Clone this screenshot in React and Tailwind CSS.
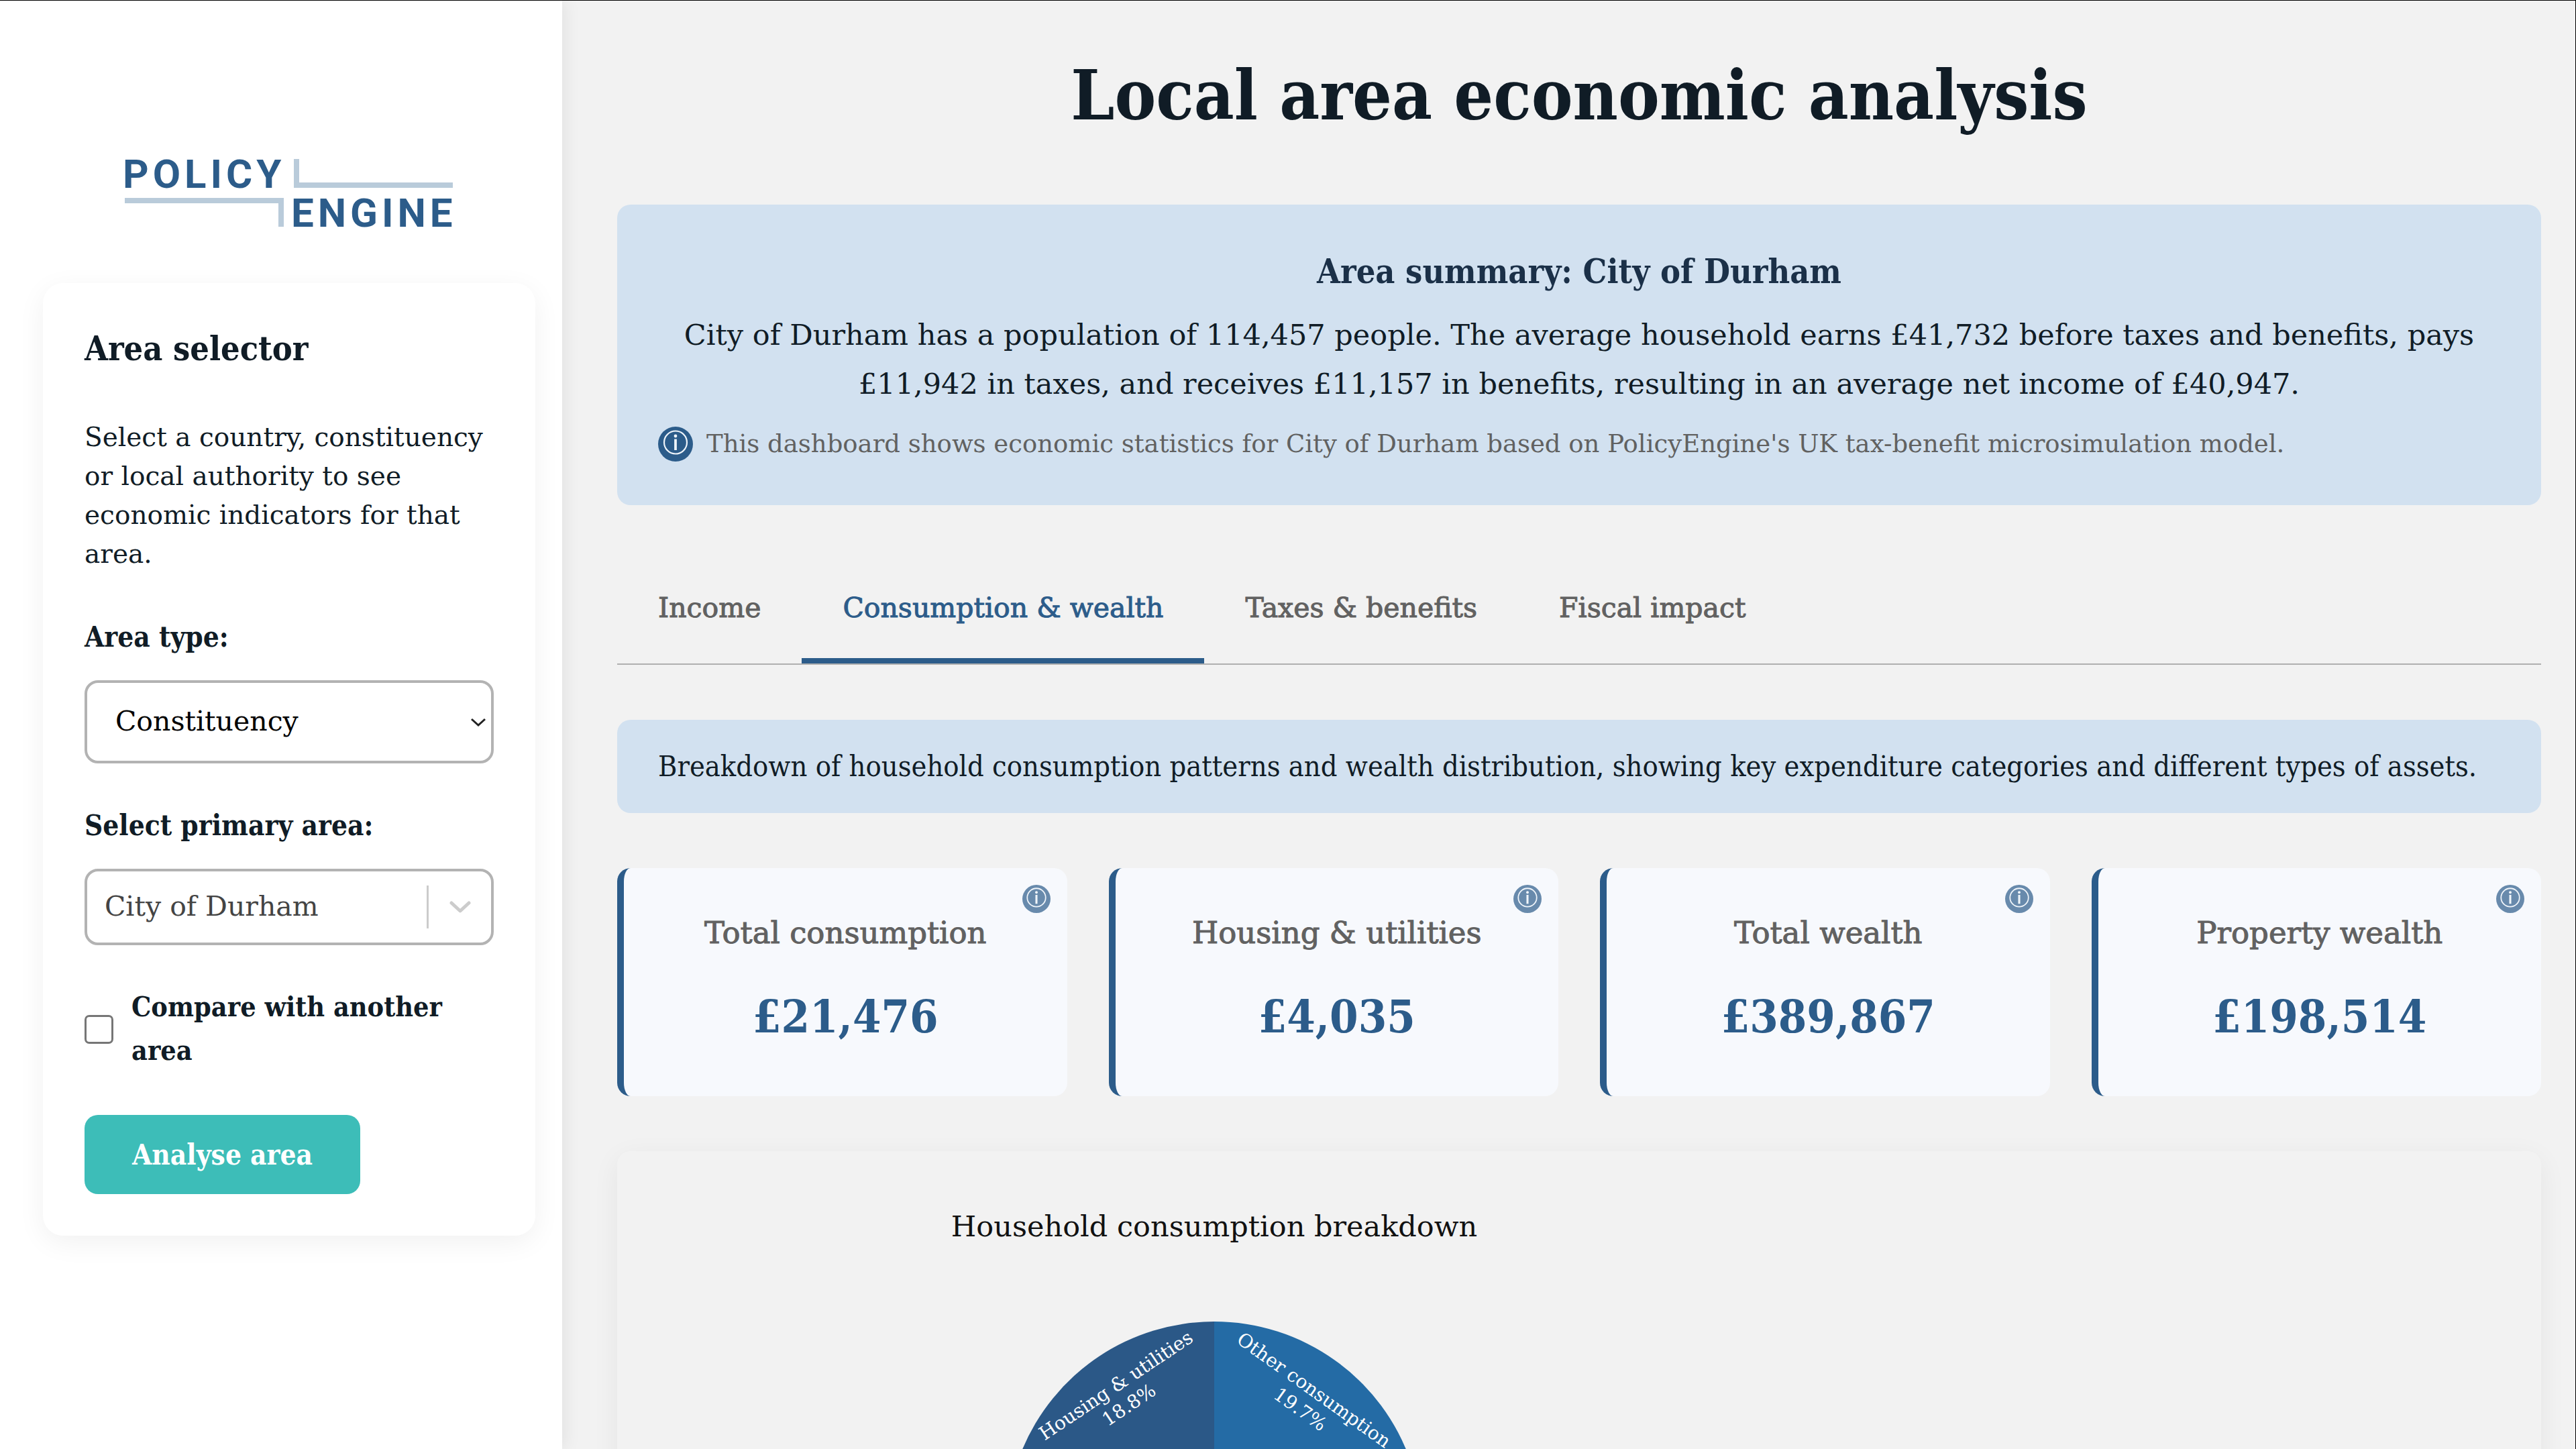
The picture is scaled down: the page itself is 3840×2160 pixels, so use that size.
import React from "react";

const logoFont = { fontFamily: 'Roboto, "Liberation Sans", sans-serif', fontWeight: 700 };

function Logo() {
  return (
    <svg viewBox="-16 -16 522 136" className="mx-auto block h-[136px] w-[522px]" role="img" aria-label="PolicyEngine">
      <g fill="#2c5c8a" fontSize="60" style={logoFont} letterSpacing="6">
        <text x="-3" y="44">POLICY</text>
        <text x="248" y="102">ENGINE</text>
      </g>
      <g fill="none" stroke="#b9cbda" strokeWidth="8">
        <path d="M256 1V40H489" />
        <path d="M0 63H233V102" />
      </g>
    </svg>
  );
}

function InfoIcon({ className }) {
  return (
    <svg viewBox="0 0 52 52" className={className} aria-hidden="true">
      <circle cx="26" cy="26" r="26" fill="#2c5c8a" />
      <circle cx="26" cy="23.5" r="17" fill="none" stroke="#eef4fa" strokeWidth="2.2" />
      <circle cx="26" cy="14" r="2.4" fill="#eef4fa" />
      <path d="M26 18.5V35" stroke="#eef4fa" strokeWidth="3.8" />
    </svg>
  );
}

function Sidebar() {
  return (
    <aside className="z-10 w-[838px] shrink-0 bg-white pt-[219px] pr-10 pl-16 shadow-[4px_0_24px_rgba(0,0,0,0.07)]">
      <Logo />
      <form className="mt-[66px] rounded-[30px] bg-white p-[62px] shadow-[0_10px_42px_rgba(0,0,0,0.06)]">
        <h2 className="font-['DejaVu_Serif_Condensed','DejaVu_Serif',serif] text-[50px] leading-[72px] font-bold">Area selector</h2>
        <p className="mt-[67px] text-[39px] leading-[58px]">
          Select a country, constituency or local authority to see economic indicators for that area.
        </p>
        <label htmlFor="type" className="mt-[66px] block font-['DejaVu_Serif_Condensed','DejaVu_Serif',serif] text-[42px] leading-[58px] font-bold">Area type:</label>
        <div className="relative mt-[35px]">
          <select id="type" className="h-[124px] w-full appearance-none rounded-[20px] border-4 border-[#b3b3b3] bg-white px-[42px] text-[41px] text-black">
            <option>Constituency</option>
          </select>
          <svg viewBox="0 0 24 14" className="pointer-events-none absolute top-[56px] right-[11px] w-6" fill="none" stroke="#222" strokeWidth="3">
            <path d="M2 2L12 11L22 2" />
          </svg>
        </div>
        <label htmlFor="area" className="mt-[64px] block font-['DejaVu_Serif_Condensed','DejaVu_Serif',serif] text-[42px] leading-[58px] font-bold">Select primary area:</label>
        <div className="relative mt-[35px]">
          <select id="area" className="h-[114px] w-full appearance-none rounded-[20px] border-4 border-[#b3b3b3] bg-white px-[26px] text-[41px] text-[#444]">
            <option>City of Durham</option>
          </select>
          <div className="pointer-events-none absolute inset-y-0 right-[34px] flex items-center gap-[31px]">
            <span className="h-16 w-[3px] bg-[#cccccc]" />
            <svg viewBox="0 0 32 20" className="w-8" fill="none" stroke="#cccccc" strokeWidth="5" strokeLinecap="round" strokeLinejoin="round">
              <path d="M3 4L16 16L29 4" />
            </svg>
          </div>
        </div>
        <label className="mt-[60px] flex items-center gap-[27px] font-['DejaVu_Serif_Condensed','DejaVu_Serif',serif] text-[41px] leading-[65px] font-bold">
          <input type="checkbox" className="size-[43px] shrink-0 appearance-none rounded-[7px] border-[3px] border-[#767676] bg-white" />
          <span>Compare with another area</span>
        </label>
        <button type="button" className="mt-[63px] h-[118px] rounded-[20px] bg-[#3dbdb8] px-[71px] font-['DejaVu_Serif_Condensed','DejaVu_Serif',serif] text-[42px] font-bold text-white">
          Analyse area
        </button>
      </form>
    </aside>
  );
}

const tabs = ["Income", "Consumption & wealth", "Taxes & benefits", "Fiscal impact"];

const metrics = [
  ["Total consumption", "£21,476"],
  ["Housing & utilities", "£4,035"],
  ["Total wealth", "£389,867"],
  ["Property wealth", "£198,514"],
];

function PieChart() {
  return (
    <svg viewBox="0 0 1780 900" className="block h-[900px] w-[1780px]" role="img" aria-label="Household consumption breakdown">
      <text x="890" y="127" textAnchor="middle" fontSize="43" fill="#111">Household consumption breakdown</text>
      <path d="M890 564V254A310 310 0 0 1 1183 463Z" fill="#246ba5" />
      <path d="M890 564L603 447A310 310 0 0 1 890 254Z" fill="#2b5887" />
      <g fill="#fff" fontSize="28" textAnchor="middle">
        <g transform="translate(746 353) rotate(-33.8)">
          <text y="5">Housing &amp; utilities</text>
          <text y="40">18.8%</text>
        </g>
        <g transform="translate(1036 360) rotate(35.5)">
          <text y="5">Other consumption</text>
          <text y="40">19.7%</text>
        </g>
      </g>
    </svg>
  );
}

export default function App() {
  return (
    <div className="flex h-screen overflow-hidden border-t border-r border-black bg-[#f2f2f2] font-['DejaVu_Serif',serif] text-[#101c26]">
      <Sidebar />
      <main className="min-w-0 flex-1 pt-[81px] pr-[51px] pl-[82px]">
        <h1 className="text-center font-['DejaVu_Serif_Condensed','DejaVu_Serif',serif] text-[103px] leading-[120px] font-bold">Local area economic analysis</h1>
        <section className="mt-[103px] rounded-[20px] bg-[#d2e1f0] px-[61px] pt-16 pb-[63px]">
          <h2 className="text-center font-['DejaVu_Serif_Condensed','DejaVu_Serif',serif] text-[50px] leading-[72px] font-bold text-[#1b3048]">Area summary: City of Durham</h2>
          <p className="mt-[22px] text-center text-[43px] leading-[73px]">
            City of Durham has a population of 114,457 people. The average household earns £41,732 before taxes and benefits, pays £11,942 in taxes, and receives £11,157 in benefits, resulting in an average net income of £40,947.
          </p>
          <p className="mt-[25px] flex items-center gap-5 text-[37px] leading-[56px] text-[#616161]">
            <InfoIcon className="size-[52px] shrink-0" />
            This dashboard shows economic statistics for City of Durham based on PolicyEngine's UK tax-benefit microsimulation model.
          </p>
        </section>
        <nav className="mt-[83px] flex border-b-2 border-[#b0b0b0]">
          {tabs.map((tab, i) => (
            <button
              key={tab}
              type="button"
              className={
                "border-b-8 px-[61px] pt-10 pb-[45px] text-[41px] leading-[60px] [-webkit-text-stroke:1px] " +
                (i === 1 ? "border-[#2c5c8a] text-[#2c5c8a]" : "border-transparent text-[#616161]")
              }
            >
              {tab}
            </button>
          ))}
        </nav>
        <p className="mt-[82px] rounded-[20px] bg-[#d2e1f0] px-[61px] py-[42px] font-['DejaVu_Serif_Condensed','DejaVu_Serif',serif] text-[43px] leading-[55px]">
          Breakdown of household consumption patterns and wealth distribution, showing key expenditure categories and different types of assets.
        </p>
        <div className="mt-[82px] grid grid-cols-4 gap-[62px]">
          {metrics.map(([label, value]) => (
            <article key={label} className="relative rounded-[20px] border-l-[10px] border-[#2c5c8a] bg-[#f7f9fd] pt-[66px] pb-[77px] text-center">
              <InfoIcon className="absolute top-[25px] right-[25px] size-[42px] opacity-70" />
              <h3 className="text-[45px] leading-[62px] text-[#616161] [-webkit-text-stroke:1px]">{label}</h3>
              <p className="mt-[51px] font-['DejaVu_Serif_Condensed','DejaVu_Serif',serif] text-[68px] leading-[84px] font-bold text-[#2c5c8a]">{value}</p>
            </article>
          ))}
        </div>
        <section className="mt-[82px] rounded-[20px] shadow-[0_10px_42px_rgba(0,0,0,0.06)]">
          <PieChart />
        </section>
      </main>
    </div>
  );
}
